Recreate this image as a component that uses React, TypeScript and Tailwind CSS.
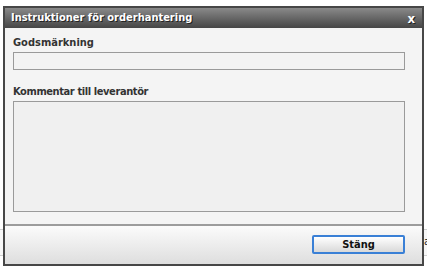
export default function App() {
  const font = { fontFamily: '"DejaVu Sans Condensed", "DejaVu Sans", Verdana, sans-serif' }
  return (
    <div className="relative h-[268px] w-[427px] overflow-hidden bg-white" style={font}>
      {/* page underneath the dialog */}
      <div className="absolute left-0 right-0 top-[229px] h-[27px] border-t border-b border-[#cfcfcf] bg-[#f7f7f7]">
        <span className="absolute left-[424px] top-[6px] text-[11px] leading-none text-[#222]">a</span>
      </div>

      <div className="absolute left-[3px] top-[6px] flex h-[260px] w-[421px] flex-col border-2 border-[#474747] bg-[#f4f4f4]">
        <div className="flex h-[20px] shrink-0 items-center justify-between bg-gradient-to-b from-[#8a8a8a] to-[#464646] pl-[6px] pr-[7px]">
          <span className="text-[11px] font-bold text-white [text-shadow:1px_1px_0_#222]">
            Instruktioner för orderhantering
          </span>
          <span className="text-[13px] font-bold leading-none text-white [text-shadow:1px_1px_0_#222]">x</span>
        </div>

        <div className="flex flex-1 flex-col px-[8px]">
          <div className="mt-[8px] text-[11px] font-bold leading-[14px] text-[#333]">Godsmärkning</div>
          <div className="mt-[2px] h-[18px] w-[392px] border border-[#9a9a9a] bg-[#f3f3f3]" />
          <div className="mt-[15px] text-[11px] font-bold leading-[14px] tracking-[-0.4px] text-[#333]">Kommentar till leverantör</div>
          <div className="mt-[2px] h-[111px] w-[392px] border border-[#9a9a9a] bg-[#f0f0f0]" />
        </div>

        <div className="flex h-[40px] shrink-0 items-start justify-end border-t-2 border-[#9c9c9c] bg-gradient-to-b from-[#fbfbfb] to-[#dedede] pr-[17px] pt-[9px]">
          <button className="h-[19px] w-[93px] rounded-[2px] border-2 border-[#3a80d6] bg-gradient-to-b from-[#ffffff] to-[#d9d9d9] text-[11px] font-bold leading-none text-[#111]">
            Stäng
          </button>
        </div>
      </div>
    </div>
  )
}
